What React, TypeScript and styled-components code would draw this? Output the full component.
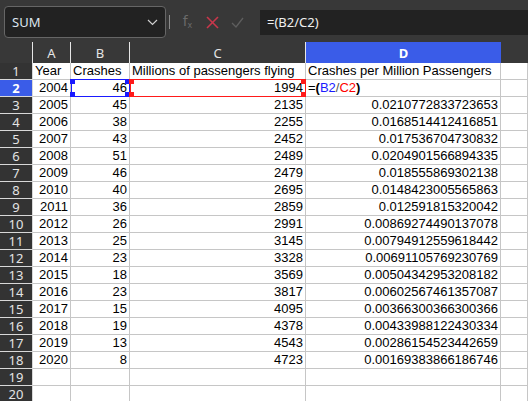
import React from 'react';
import styled, { createGlobalStyle } from 'styled-components';

const Global = createGlobalStyle`
  html, body { margin: 0; padding: 0; background: #383838; overflow: hidden; }
  #root { width: 528px; height: 401px; overflow: hidden; }
`;

const Page = styled.div`
  width: 528px;
  height: 401px;
  display: flex;
  flex-direction: column;
  background: #383838;
  overflow: hidden;
`;

const Toolbar = styled.div`
  height: 42px;
  flex: none;
  display: flex;
  align-items: center;
  box-sizing: border-box;
  padding: 4px 0 2px 4px;
  font-family: "Noto Sans", "Open Sans", sans-serif;
`;

const NameBox = styled.div`
  width: 162px;
  height: 32px;
  box-sizing: border-box;
  border: 1px solid #666;
  border-radius: 4px;
  background: #222;
  display: flex;
  align-items: center;
  justify-content: space-between;
  padding: 0 7px 0 7px;
  color: #dde6f0;
  font-size: 13px;
`;

const Separator = styled.div`
  width: 1px;
  height: 14px;
  background: #8a8a8a;
  margin-left: 3px;
  margin-right: 5px;
`;

const IconSlot = styled.div`
  width: 25px;
  height: 25px;
  display: flex;
  align-items: center;
  justify-content: center;
`;

const Fx = styled.span`
  font-family: "DejaVu Sans", sans-serif;
  font-size: 14px;
  color: #6a6a6a;
  line-height: 1;
  sub { font-size: 8px; vertical-align: -2px; }
`;

const FormulaBar = styled.div`
  flex: 1;
  height: 25px;
  margin-left: 10px;
  background: #222;
  display: flex;
  align-items: center;
  padding-left: 7px;
  color: #f0f0f0;
  font-size: 13px;
`;

const Sheet = styled.div`
  flex: 1;
  display: grid;
  grid-template-columns: 33px 38px 59px 176px 195px 1fr;
  grid-template-rows: 21px;
  grid-auto-rows: 17px;
  background: #fff;
`;

const ColHeader = styled.div<{ $sel?: boolean; $last?: boolean }>`
  box-sizing: border-box;
  background: ${p => (p.$sel ? '#3a5ce8' : '#383838')};
  border-right: ${p => (p.$last || p.$sel ? 'none' : '1px solid #e6e6e6')};
  color: ${p => (p.$sel ? '#fff' : '#e4e4e4')};
  font-family: "Noto Sans", "Open Sans", sans-serif;
  font-size: 13px;
  font-weight: ${p => (p.$sel ? 700 : 400)};
  display: flex;
  align-items: center;
  justify-content: center;
`;

const RowHeader = styled.div<{ $sel?: boolean }>`
  box-sizing: border-box;
  background: ${p => (p.$sel ? '#3a5ce8' : '#333')};
  border-bottom: 1px solid #d8d8d8;
  border-right: 1px solid #d8d8d8;
  color: ${p => (p.$sel ? '#fff' : '#e4e4e4')};
  font-family: "Noto Sans", "Open Sans", sans-serif;
  font-size: 13px;
  font-weight: ${p => (p.$sel ? 700 : 400)};
  display: flex;
  align-items: center;
  justify-content: center;
  line-height: 16px;
`;

const Cell = styled.div<{ $right?: boolean }>`
  position: relative;
  box-sizing: border-box;
  border-right: 1px solid #c6c6c6;
  border-bottom: 1px solid #c6c6c6;
  font-family: "Liberation Sans", Arial, sans-serif;
  font-size: 13px;
  line-height: 16px;
  color: #000;
  padding: 0 2px;
  white-space: nowrap;
  text-align: ${p => (p.$right ? 'right' : 'left')};
`;

const Frame = styled.div<{ $color: string }>`
  position: absolute;
  left: 0;
  top: -1px;
  right: -1px;
  bottom: -1px;
  border: 1px solid ${p => p.$color};
  pointer-events: none;
`;

const Handle = styled.div<{ $color: string; $x: 'l' | 'r'; $y: 't' | 'b' }>`
  position: absolute;
  width: 5px;
  height: 5px;
  background: ${p => p.$color};
  ${p => (p.$x === 'l' ? 'left: -1px;' : 'right: -1px;')}
  ${p => (p.$y === 't' ? 'top: -1px;' : 'bottom: -1px;')}
`;

const Blue = styled.span` color: #1a1aff; `;
const Red = styled.span` color: #ff0000; `;
const Slash = styled.span` color: #555; `;
const Paren = styled.span` font-weight: 700; `;

const data: [number, number, number, string][] = [
  [2004, 46, 1994, ''],
  [2005, 45, 2135, '0.0210772833723653'],
  [2006, 38, 2255, '0.0168514412416851'],
  [2007, 43, 2452, '0.017536704730832'],
  [2008, 51, 2489, '0.0204901566894335'],
  [2009, 46, 2479, '0.018555869302138'],
  [2010, 40, 2695, '0.0148423005565863'],
  [2011, 36, 2859, '0.012591815320042'],
  [2012, 26, 2991, '0.00869274490137078'],
  [2013, 25, 3145, '0.00794912559618442'],
  [2014, 23, 3328, '0.00691105769230769'],
  [2015, 18, 3569, '0.00504342953208182'],
  [2016, 23, 3817, '0.00602567461357087'],
  [2017, 15, 4095, '0.00366300366300366'],
  [2018, 19, 4378, '0.00433988122430334'],
  [2019, 13, 4543, '0.00286154523442659'],
  [2020, 8, 4723, '0.00169383866186746'],
];

const Handles = ({ color }: { color: string }) => (
  <>
    <Frame $color={color} />
    <Handle $color={color} $x="l" $y="t" />
    <Handle $color={color} $x="l" $y="b" />
    <Handle $color={color} $x="r" $y="t" />
    <Handle $color={color} $x="r" $y="b" />
  </>
);

export default function App() {
  return (
    <Page>
      <Global />
      <Toolbar>
        <NameBox>
          <span>SUM</span>
          <svg width="11" height="7" viewBox="0 0 11 7">
            <polyline points="1,1 5.5,5.5 10,1" fill="none" stroke="#cfcfcf" strokeWidth="1.2" />
          </svg>
        </NameBox>
        <Separator />
        <IconSlot>
          <Fx>f<sub>x</sub></Fx>
        </IconSlot>
        <IconSlot>
          <svg width="13" height="13" viewBox="0 0 13 13">
            <line x1="1" y1="1" x2="12" y2="12" stroke="#c8374b" strokeWidth="1.6" />
            <line x1="12" y1="1" x2="1" y2="12" stroke="#c8374b" strokeWidth="1.6" />
          </svg>
        </IconSlot>
        <IconSlot>
          <svg width="13" height="11" viewBox="0 0 13 11">
            <polyline points="1,6 5,10 12,1" fill="none" stroke="#5e5e5e" strokeWidth="1.3" />
          </svg>
        </IconSlot>
        <FormulaBar>=(B2/C2)</FormulaBar>
      </Toolbar>
      <Sheet>
        <ColHeader />
        <ColHeader>A</ColHeader>
        <ColHeader>B</ColHeader>
        <ColHeader>C</ColHeader>
        <ColHeader $sel>D</ColHeader>
        <ColHeader $last />

        <RowHeader>1</RowHeader>
        <Cell>Year</Cell>
        <Cell>Crashes</Cell>
        <Cell>Millions of passengers flying</Cell>
        <Cell>Crashes per Million Passengers</Cell>
        <Cell />

        {data.map(([y, c, m, r], i) => {
          const row = i + 2;
          const first = row === 2;
          return (
            <React.Fragment key={row}>
              <RowHeader $sel={first}>{row}</RowHeader>
              <Cell $right>{y}</Cell>
              <Cell $right>
                {c}
                {first && <Handles color="#1a1aff" />}
              </Cell>
              <Cell $right>
                {m}
                {first && <Handles color="#ff1a1a" />}
              </Cell>
              {first ? (
                <Cell>
                  ={<Paren>(</Paren>}
                  <Blue>B2</Blue>
                  <Slash>/</Slash>
                  <Red>C2</Red>
                  <Paren>)</Paren>
                </Cell>
              ) : (
                <Cell $right>{r}</Cell>
              )}
              <Cell />
            </React.Fragment>
          );
        })}

        {[19, 20].map(row => (
          <React.Fragment key={row}>
            <RowHeader>{row}</RowHeader>
            <Cell />
            <Cell />
            <Cell />
            <Cell />
            <Cell />
          </React.Fragment>
        ))}
      </Sheet>
    </Page>
  );
}
